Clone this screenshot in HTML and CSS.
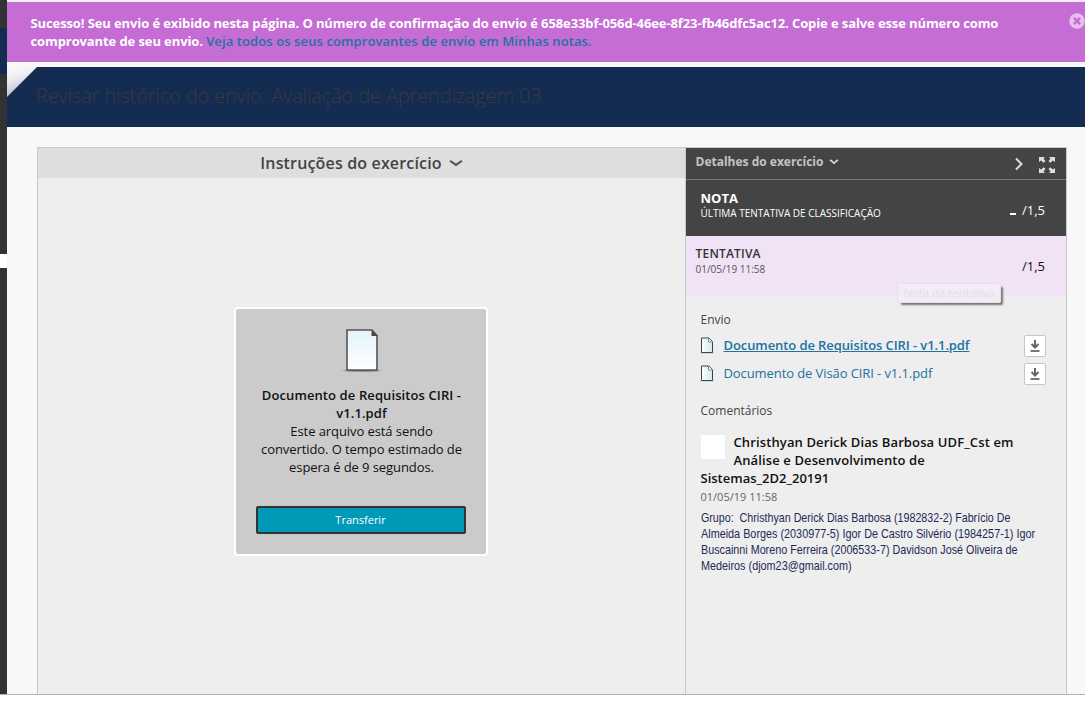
FILE: index.html
```html
<!DOCTYPE html>
<html lang="pt-BR">
<head>
<meta charset="utf-8">
<title>Revisar histórico do envio</title>
<link rel="stylesheet" href="styles.css">
</head>
<body>
<div class="frame">
  <aside class="rail"><div class="rail-top"></div><div class="rail-active"></div><div class="rail-mid"></div><div class="rail-gap"></div><div class="rail-rest"></div></aside>
  <main class="content">
    <div class="banner">
      <p class="banner-text"><span class="l1">Sucesso! Seu envio é exibido nesta página. O número de confirmação do envio é 658e33bf-056d-46ee-8f23-fb46dfc5ac12. Copie e salve esse número como</span><br><span class="l2">comprovante de seu envio. </span><a class="banner-link">Veja todos os seus comprovantes de envio em Minhas notas.</a></p>
      <svg class="close" width="16" height="16" viewBox="0 0 16 16"><circle cx="8" cy="8" r="7.700" fill="#e8c0ed"/><path d="M4.9 4.9l6.2 6.2M11.1 4.9l-6.2 6.2" stroke="#c56dd4" stroke-width="2.6"/></svg>
    </div>
    <header class="page-head">
      <svg class="fold" width="30" height="30" viewBox="0 0 30 30"><defs><linearGradient id="fg" x1="0.1" y1="0" x2="0.4" y2="0.8"><stop offset="0" stop-color="#fafafa"/><stop offset=".45" stop-color="#eceef0"/><stop offset="1" stop-color="#c4c9d0"/></linearGradient></defs><path d="M0 0h30L0 30z" fill="url(#fg)"/></svg>
      <h1 class="title"><span>Revisar histórico do envio: Avaliação de Aprendizagem 03</span></h1>
    </header>
    <div class="workspace">
      <section class="viewer">
        <h2 class="viewer-head"><span>Instruções do exercício</span><svg width="14" height="8" viewBox="0 0 14 8"><path d="M1 1.800Q4.500 3.700 7 6.100Q9.500 3.700 13 1.800" fill="none" stroke="#555" stroke-width="2.1"/></svg></h2>
        <div class="viewer-body">
          <div class="card">
            <svg class="bigdoc" width="46" height="46" viewBox="0 0 46 46"><defs><linearGradient id="dg" x1="0" y1="0" x2="0" y2="1"><stop offset="0" stop-color="#e2f3fd"/><stop offset="1" stop-color="#fff"/></linearGradient><radialGradient id="sg"><stop offset="0" stop-color="#777"/><stop offset=".7" stop-color="#999"/><stop offset="1" stop-color="#ccc"/></radialGradient></defs><ellipse cx="23" cy="42.5" rx="22" ry="2" fill="url(#sg)"/><path d="M8 2h25l5 5.500V42H8z" fill="url(#dg)" stroke="#555" stroke-width="1.600"/><path d="M32.500 1.500L39 8H32.500z" fill="#484848"/></svg>
            <p class="card-name"><span class="c1">Documento de Requisitos CIRI -</span><br><span class="c2">v1.1.pdf</span></p>
            <p class="card-msg"><span>Este arquivo está sendo</span><br><span>convertido. O tempo estimado de</span><br><span>espera é de 9 segundos.</span></p>
            <button class="transfer"><span>Transferir</span></button>
          </div>
        </div>
      </section>
      <aside class="details">
        <div class="details-bar">
          <span class="details-title">Detalhes do exercício</span>
          <svg class="chev" width="10" height="6" viewBox="0 0 10 6"><path d="M1 1Q3.500 2.500 5 4.200Q6.500 2.500 9 1" fill="none" stroke="#d8d8d8" stroke-width="1.500"/></svg>
          <svg class="next" width="8" height="14" viewBox="0 0 8 14"><path d="M1 1.500L6.500 7L1 12.500" fill="none" stroke="#ddd" stroke-width="2"/></svg>
          <svg class="expand" width="16" height="16" viewBox="0 0 16 16" fill="#ddd"><g id="ar"><path d="M0 0h6L4.500 1.700l2 2.200-1.800 1.800-2.700-2.200L0 5z"/></g><use href="#ar" transform="translate(16 0) scale(-1 1)"/><use href="#ar" transform="translate(0 16) scale(1 -1)"/><use href="#ar" transform="translate(16 16) scale(-1 -1)"/></svg>
        </div>
        <div class="grade">
          <div class="grade-copy"><strong>NOTA</strong><span class="sub">ÚLTIMA TENTATIVA DE CLASSIFICAÇÃO</span></div>
          <i class="dash"></i><span class="score">/1,5</span>
        </div>
        <div class="attempt">
          <div class="attempt-copy"><strong>TENTATIVA</strong><span class="date">01/05/19 11:58</span></div>
          <span class="score">/1,5</span>
          <div class="tooltip"><span>Nota da tentativa</span></div>
        </div>
        <div class="details-body">
          <h3 class="label envio">Envio</h3>
          <div class="file current"><svg class="doc" width="14" height="17" viewBox="0 0 14 17"><defs><linearGradient id="sd"><stop offset="0" stop-color="#fff"/><stop offset="1" stop-color="#d0eaea"/></linearGradient></defs><path d="M0 16h14" stroke="#b8c4c4"/><path d="M1.500 15.500V1H9l3.500 3.500v11z" fill="url(#sd)" stroke="#34474d"/><path d="M8.500 1v4h4" fill="#fff" stroke="#7d8b8e"/></svg><a class="f1">Documento de Requisitos CIRI - v1.1.pdf</a><button class="dl"><svg width="12" height="12" viewBox="0 0 12 12"><path d="M6 0v7M2.500 4L6 7.500 9.500 4" fill="none" stroke="#666" stroke-width="2"/><path d="M1.500 11h9" stroke="#777" stroke-width="2"/></svg></button></div>
          <div class="file"><svg class="doc" width="14" height="17" viewBox="0 0 14 17"><path d="M0 16h14" stroke="#b8c4c4"/><path d="M1.500 15.500V1H9l3.500 3.500v11z" fill="url(#sd)" stroke="#34474d"/><path d="M8.500 1v4h4" fill="#fff" stroke="#7d8b8e"/></svg><a class="f2">Documento de Visão CIRI - v1.1.pdf</a><button class="dl"><svg width="12" height="12" viewBox="0 0 12 12"><path d="M6 0v7M2.500 4L6 7.500 9.500 4" fill="none" stroke="#666" stroke-width="2"/><path d="M1.500 11h9" stroke="#777" stroke-width="2"/></svg></button></div>
          <h3 class="label comments"><span>Comentários</span></h3>
          <div class="author"><i class="avatar"></i><span class="a1">Christhyan Derick Dias Barbosa UDF_Cst em</span><br><span class="a2">Análise e Desenvolvimento de</span><br><span class="a3">Sistemas_2D2_20191</span></div>
          <div class="when">01/05/19 11:58</div>
          <div class="comment"><span class="g1">Grupo:&nbsp; Christhyan Derick Dias Barbosa (1982832-2) Fabrício De</span><span>Almeida Borges (2030977-5) Igor De Castro Silvério (1984257-1) Igor</span><span class="g3">Buscainni Moreno Ferreira (2006533-7) Davidson José Oliveira de</span><span>Medeiros (djom23@gmail.com)</span></div>
        </div>
      </aside>
    </div>
  </main>
</div>
</body>
</html>
```
FILE: styles.css
```css
* { box-sizing: border-box; }
body { margin: 0; background: #fff; font: 13px/18px "Open Sans", sans-serif; color: #111; overflow: hidden; }
h1, h2, h3, p { margin: 0; }
button { font: inherit; padding: 0; margin: 0; }
span, a { white-space: nowrap; }
.frame { display: flex; width: 1085px; height: 695px; border-bottom: 1px solid #b0b0b0; }
.rail { width: 7px; flex: none; background: #333; }
.rail-top { height: 28px; }
.rail-active { height: 46px; background: #142b52; }
.rail-mid { height: 180px; }
.rail-gap { height: 14px; background: #fff; }
.content { flex: 1; min-width: 0; display: flex; flex-direction: column; background: #f8f8f8; border-top: 2px solid #efeff1; }
.banner { position: relative; flex: none; height: 60px; background: #c56dd4; padding: 12px 0 0 23.5px; }
.banner-text { color: #fff; font-weight: 700; }
.l1 { letter-spacing: -.105px; }
.l2 { letter-spacing: -.1px; }
.banner-link { color: #2272a5; font-weight: 600; letter-spacing: .1px; }
.close { position: absolute; right: 0; top: 10.500px; }
.page-head { position: relative; flex: none; height: 60px; margin-top: 5px; background: #142b52; padding: 15px 0 0 29px; }
.fold { position: absolute; left: 0; top: 0; }
.title { font-size: 20px; line-height: 28px; font-weight: 300; color: #3a3a3a; letter-spacing: -.145px; }
.workspace { flex: 1; display: flex; width: 1030px; margin: 20px 0 0 30px; border: 1px solid #c9c9c9; border-bottom: 0; background: #eee; }
.viewer { width: 647px; flex: none; }
.viewer-head { display: flex; justify-content: center; align-items: center; gap: 7px; height: 30px; background: #dedede; color: #444; font-size: 16px; font-weight: 600; letter-spacing: .16px; }
.viewer-body { display: flex; justify-content: center; padding: 129px 2px 0 0; }
.card { width: 254px; height: 249px; background: #cbcbcb; border: 2px solid #fff; border-radius: 4px; padding: 19px 20px 0; text-align: center; }
.bigdoc { display: block; margin: 0 auto 12px 83px; }
.card-name { font-weight: 600; letter-spacing: .1px; padding-left: 2px; }
.card-msg { letter-spacing: -.08px; padding-left: 2px; }
.transfer { display: block; width: 210px; height: 28px; margin: 30px 0 0; border: 2px solid #333; border-radius: 2px; background: #009ab9; color: #fff; font-size: 11px; line-height: 24px; }
.details { width: 381px; flex: none; border-left: 1px solid #c9c9c9; }
.details-bar { display: flex; height: 32px; background: #444; border-bottom: 1px solid #777; padding: 5px 11px 0 9.500px; color: #c4c4c4; font-size: 12px; font-weight: 700; }
.chev { margin: 6px 0 0 6px; }
.next { margin: 4px 0 0 auto; }
.expand { margin: 4px 0 0 16px; }
.grade { display: flex; height: 56px; background: #444; color: #fff; padding: 9px 21px 0 14.500px; }
.grade-copy, .attempt-copy { flex: 1; display: flex; flex-direction: column; }
.sub { font-size: 10px; line-height: 12px; }
.dash { width: 6px; height: 2px; margin: 24px 6px 0 0; background: #fff; }
.grade .score { margin-top: 12px; }
.attempt { position: relative; display: flex; height: 60px; background: #f2e2f6; padding: 9px 21px 0 9.500px; }
.attempt strong { font-size: 12px; font-weight: 600; line-height: 17px; color: #333; letter-spacing: .2px; }
.date { font-size: 10px; line-height: 14px; color: #555; }
.attempt .score { margin-top: 12px; }
.tooltip { position: absolute; left: 211px; top: 47px; width: 104px; height: 20px; border: 1px solid #e8dfeb; border-radius: 2px; background: rgba(243, 236, 245, .93); box-shadow: 3px 3px 2px -1px #777; color: #e6dbe9; font-size: 11.300px; line-height: 18px; text-align: center; }
.details-body { padding: 15px 20px 0 14.500px; }
.label { font-size: 12px; font-weight: 400; color: #444; line-height: 18px; }
.envio { margin-bottom: 2px; }
.file { display: flex; align-items: center; height: 28px; color: #2272a0; letter-spacing: -.09px; }
.file.current { font-weight: 600; text-decoration: underline; }
.doc { flex: none; margin: 0 9.500px 0 -.5px; }
.dl { display: flex; align-items: center; justify-content: center; width: 22px; height: 22px; margin: 1px 0 0 auto; border: 1px solid #c6c6c6; border-radius: 2px; background: #fff; }
.comments { margin-top: 15px; }
.author { margin-top: 13px; font-weight: 600; }
.a1, .a2 { letter-spacing: .12px; }
.avatar { float: left; width: 24px; height: 24px; margin: 2px 9px 0 0; background: #fff; }
.when { font-size: 11px; color: #666; line-height: 19px; }
.comment { display: flex; flex-direction: column; align-items: flex-start; margin-top: 4px; color: #1c2b55; font: 13px/16px "Liberation Sans Narrow", "Liberation Sans", Arial, sans-serif; }
.comment span { transform: scaleX(.833); transform-origin: left; }
.comment .g1 { transform: scaleX(.822); }
.comment .g3 { transform: scaleX(.828); }
```
